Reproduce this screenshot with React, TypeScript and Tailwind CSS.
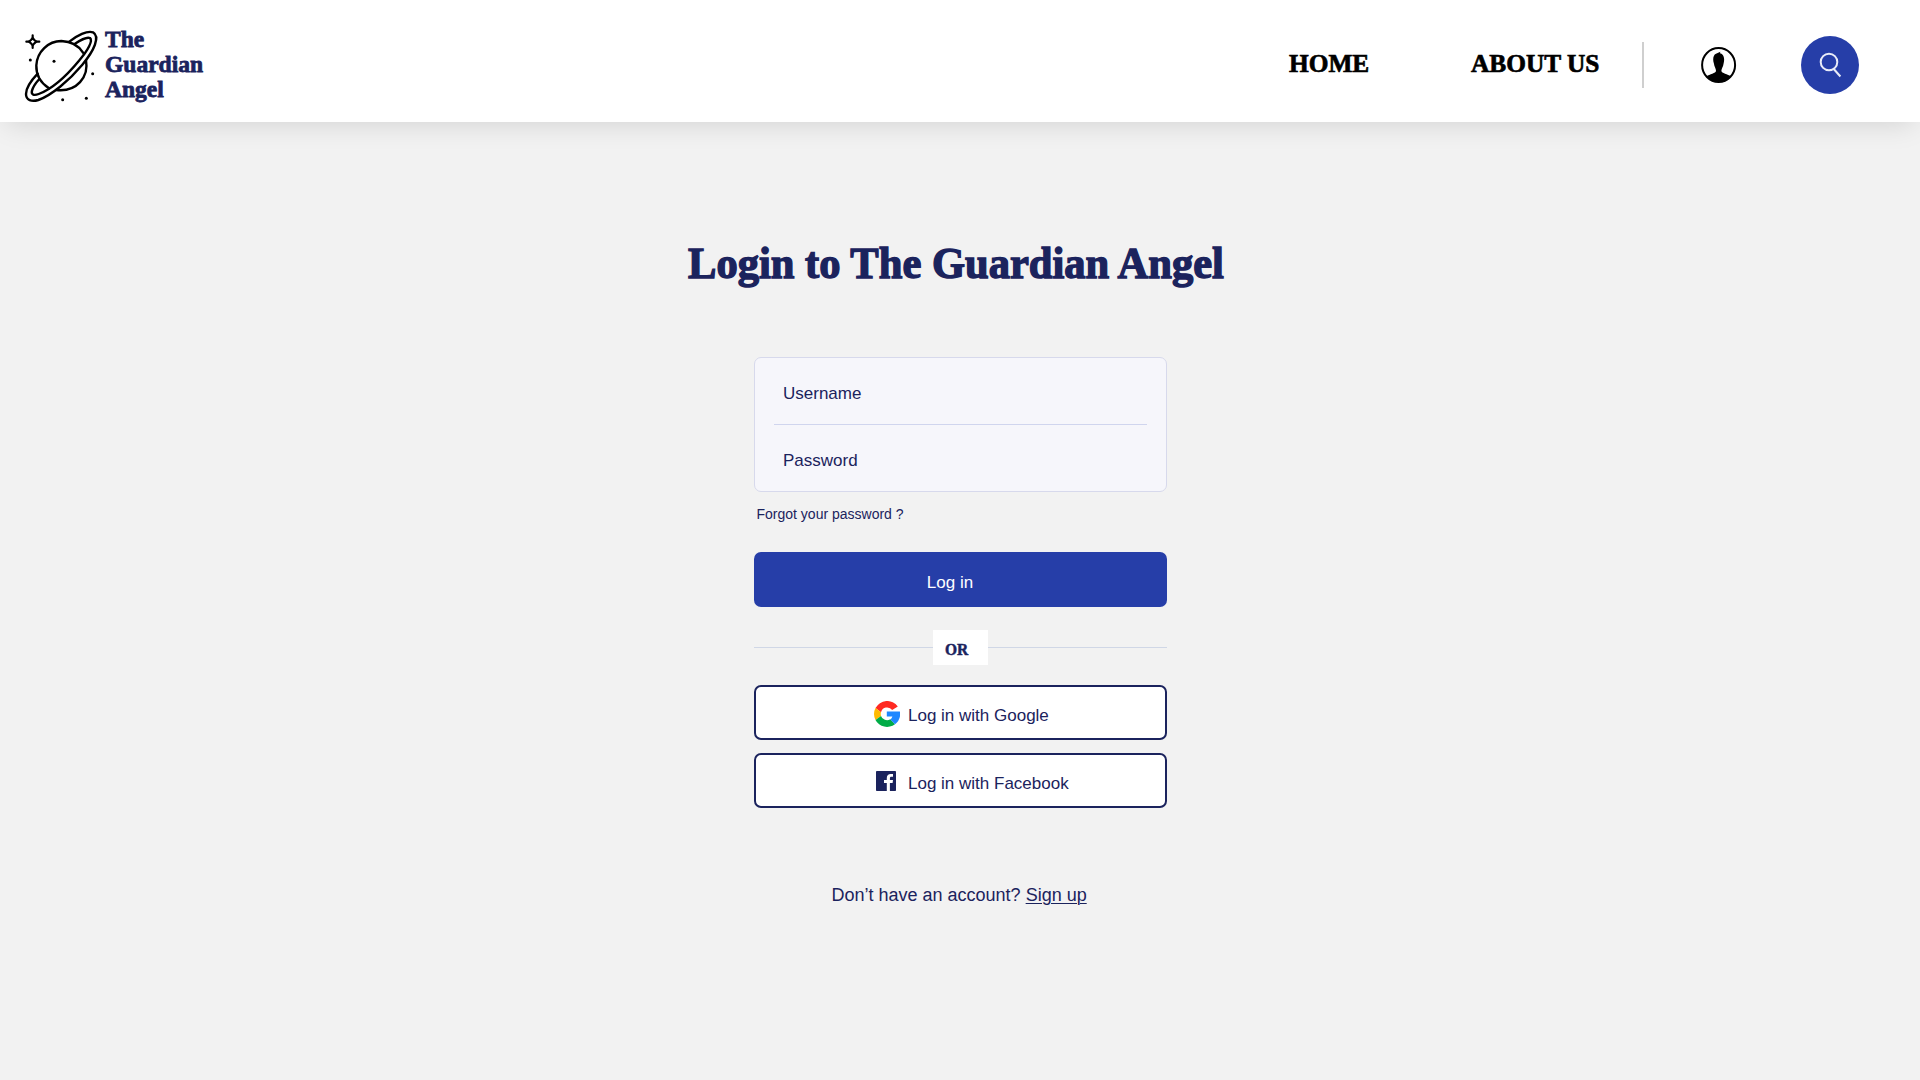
import React from "react";

const serif = "font-['Liberation_Serif',serif] font-bold whitespace-nowrap origin-left";

function Planet() {
  return (
    <svg className="block h-[85px] w-[85px] shrink-0" viewBox="0 0 255 255" fill="none" stroke="#000" strokeWidth="7.2" strokeLinecap="round" strokeLinejoin="round">
      <path d="M87 190 C60 172 48 148 49 121 C51 80 85 48 124 48 C152 49 176 62 189 83" />
      <path d="M198 106 C207 155 171 202 109 195" />
      <path d="M148 50 C171 31 202 16 219 22 C241 35 223 76 187 119 C146 168 94 211 55 225 C35 231 18 226 18 207 C18 190 32 168 53 146" />
      <path d="M165 56 C184 43 203 36 210 39 C219 47 205 75 177 107 C139 153 93 193 56 207 C40 213 33 208 36 197 C39 186 47 174 58 162" />
      <path d="M38 31V38M38 62V69M19 50H26M50 50H58" strokeWidth="6.5" />
      <path d="M38 39L43 45L49 50L43 55L38 61L33 55L27 50L33 45Z" strokeWidth="6.5" />
      <g fill="#000" stroke="none">
        <circle cx="31" cy="105" r="4.5" /><circle cx="102" cy="109" r="4.5" /><circle cx="218" cy="146" r="4.5" />
        <circle cx="128" cy="224" r="4.5" /><circle cx="199" cy="220" r="4.5" />
      </g>
    </svg>
  );
}

function UserIcon() {
  return (
    <svg className="block h-9 w-9" viewBox="0 0 36 36">
      <ellipse cx="17.6" cy="18" rx="16.5" ry="16.9" fill="#fff" stroke="#000" strokeWidth="2" />
      <path d="M5.5 29.5 C8.5 27 15 26.5 15 23.8 C15 21.5 13.3 20 12.9 16.5 C11.6 13 12 8 15 6.8 L19.4 4.8 L18.9 6.2 C23.2 7 23.8 12 22.6 16.5 C22.3 20 20.4 21.5 20.4 23.8 C20.4 26.5 27 27 29.8 29.5 C23.5 36.5 11.8 36.5 5.5 29.5Z" />
    </svg>
  );
}

function GoogleIcon() {
  return (
    <svg className="block h-[26px] w-[26px]" viewBox="0 0 26 26">
      <path fill="#ff2a22" d="M1.5 7.1A13 13 0 0 1 23.8 5.6L18.2 9A6.3 6.3 0 0 0 7 11.2Z" />
      <path fill="#ffba00" d="M1.5 7.1A13 13 0 0 0 1.5 18.9L7 14.9A6.3 6.3 0 0 1 7 11.2Z" />
      <path fill="#00ac47" d="M1.5 18.9A13 13 0 0 0 21 23.2L16.3 18.3A6.3 6.3 0 0 1 7 14.9Z" />
      <path fill="#1e88ff" d="M12.8 10.6H25.9A13 13 0 0 1 21 23.2L16.3 18.6A6 6 0 0 0 18.4 15.6H12.8Z" />
    </svg>
  );
}

function FacebookIcon() {
  return (
    <svg className="block h-5 w-5" viewBox="0 0 20 20">
      <rect width="20" height="20" rx="0.8" fill="#1b235d" />
      <path d="M10.8 20V12H8V9H10.8V7C10.8 4.3 12.4 3 14.8 3H17V5.8H15.5C14.2 5.8 13.9 6.4 13.9 7.4V9H17L16.6 12H13.9V20Z" fill="#fff" />
    </svg>
  );
}

export default function App() {
  return (
    <div className="min-h-screen w-full overflow-hidden bg-[#f2f2f2] font-['Liberation_Sans',sans-serif] text-[17px] text-[#1b235d]">
      <header className="flex h-[122px] w-full bg-white shadow-[0_8px_26px_-6px_rgba(0,0,0,0.13)]">
        <a className="flex pt-[25px] pl-5">
          <Planet />
          <span className={`${serif} mt-0.5 block scale-x-[0.98] text-2xl leading-[25px] [-webkit-text-stroke:0.8px_#1b235d]`}>
            The<br />Guardian<br />Angel
          </span>
        </a>
        <nav className="ml-auto flex text-[26px] text-black">
          <a className={`${serif} mt-[49px] block w-[182px] scale-x-[0.975] leading-[30px] [-webkit-text-stroke:0.7px_black]`}>HOME</a>
          <a className={`${serif} mt-[49px] block w-[171px] scale-x-[0.975] leading-[30px] [-webkit-text-stroke:0.7px_black]`}>ABOUT US</a>
          <span className="mt-[42px] block h-[46px] w-[2px] bg-[#cfcfcf]" />
        </nav>
        <button className="mt-[47px] ml-[57px] block h-9 w-9"><UserIcon /></button>
        <button className="mt-9 mr-[61px] ml-16 block h-[58px] w-[58px] rounded-full bg-[#263ea8]">
          <svg className="block h-[58px] w-[58px]" viewBox="0 0 58 58" fill="none" stroke="#e9ecf8" strokeWidth="2">
            <circle cx="28" cy="26" r="8.3" /><path d="M32.3 32.5L39.4 40.5" />
          </svg>
        </button>
      </header>
      <main className="ml-[754px] w-[413px]">
        <h1 className={`${serif} mt-[112px] -ml-[66px] block h-[60px] w-[608px] scale-x-[0.967] text-[44px] leading-[60px] [-webkit-text-stroke:1.4px_#1b235d]`}>Login to The Guardian Angel</h1>
        <form className="mt-[63px] flex h-[135px] flex-col rounded-[7px] border border-[#d7d9ec] bg-[#f6f6fb] px-[19px]">
          <label className="h-[67px] border-b border-[#d0d5ee] pt-[26px] pl-[9px] leading-5">Username</label>
          <label className="pt-[26px] pl-[9px] leading-5">Password</label>
        </form>
        <a className="mt-[14px] ml-[2.5px] block text-sm leading-4">Forgot your password ?</a>
        <button className="mt-[30px] block h-[55px] w-full rounded-[7px] bg-[#263ea8] pt-[7px] pr-[21px] text-white">Log in</button>
        <div className="mt-[23px] flex h-[35px] items-center">
          <span className="h-px flex-1 bg-[#d0d7e6]" />
          <span className="h-[35px] w-[55px] bg-white pt-[10px] pl-[12px]">
            <b className={`${serif} block scale-x-[0.91] text-[17px] leading-5 [-webkit-text-stroke:0.5px_#1b235d]`}>OR</b>
          </span>
          <span className="h-px flex-1 bg-[#d0d7e6]" />
        </div>
        <button className="mt-5 flex h-[55px] w-full rounded-[7px] border-2 border-[#1b235d] bg-white pl-[118px]">
          <span className="mt-[14px] w-[34px]"><GoogleIcon /></span>
          <span className="mt-[19px] leading-5">Log in with Google</span>
        </button>
        <button className="mt-[13px] flex h-[55px] w-full rounded-[7px] border-2 border-[#1b235d] bg-white pl-[120px]">
          <span className="mt-4 w-[32px]"><FacebookIcon /></span>
          <span className="mt-[19px] leading-5">Log in with Facebook</span>
        </button>
        <p className="mt-[76px] ml-[77.5px] text-lg leading-[22px] whitespace-nowrap">Don’t have an account? <a className="underline decoration-1 underline-offset-2">Sign up</a></p>
      </main>
    </div>
  );
}
